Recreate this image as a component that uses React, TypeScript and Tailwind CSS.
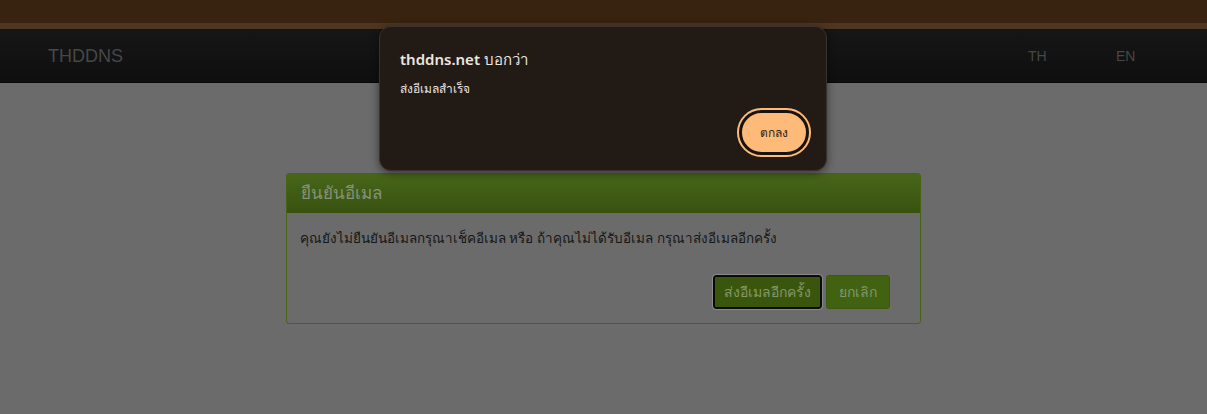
export default function App() {
  return (
    <div className="relative h-[414px] w-full overflow-hidden bg-[#6b6b6b] font-['Liberation_Sans',sans-serif]">
      {/* top strip */}
      <div className="h-[23px] bg-[#37230f]" />
      <div className="h-[7px] bg-[#4e3720] border-b border-[#1a120a]" />
      {/* navbar */}
      <div className="flex h-[53px] items-center bg-gradient-to-b from-[#161616] to-[#0f0f0f] border-b border-[#080808]">
        <div className="pl-[48px] text-[18px] text-[#474747]">THDDNS</div>
        <div className="ml-auto flex">
          <span className="w-[88px] text-[14px] text-[#474747]">TH</span>
          <span className="w-[91px] text-[14px] text-[#474747]">EN</span>
        </div>
      </div>

      {/* panel */}
      <div className="flex justify-center pt-[90px] pr-[1px]">
        <div className="w-[635px] rounded-[3px] border border-[#456414] bg-[#6b6b6b]">
          <div className="flex h-[39px] items-center bg-gradient-to-b from-[#48661a] to-[#37520f] px-[14px] text-[17px] text-[#87927a]">
            ยืนยันอีเมล
          </div>
          <div className="px-[13px] pt-[16px] text-[13.5px] font-medium text-[#161616]">
            คุณยังไม่ยืนยันอีเมลกรุณาเช็คอีเมล หรือ ถ้าคุณไม่ได้รับอีเมล กรุณาส่งอีเมลอีกครั้ง
          </div>
          <div className="flex justify-end gap-[4px] px-[30px] pt-[26px] pb-[14px]">
            <button className="h-[34px] rounded-[3px] border-2 border-[#0a0a0a] bg-[#3a560d] px-[9px] text-[14px] text-[#86966c] outline outline-1 outline-[#8a8a8a]">
              ส่งอีเมลอีกครั้ง
            </button>
            <button className="h-[34px] rounded-[3px] border border-[#3b5a0f] bg-[#416211] px-[12px] text-[14px] text-[#86966c]">
              ยกเลิก
            </button>
          </div>
        </div>
      </div>

      {/* browser alert */}
      <div className="absolute left-[379px] top-[26px] flex h-[145px] w-[448px] flex-col rounded-[12px] border border-[#3a332d] bg-[#221a15] px-[20px] pb-[15px] shadow-[0_2px_8px_rgba(0,0,0,0.5)] font-['Noto_Sans',sans-serif]">
        <div className="pt-[21px] text-[15px] text-[#ece6e0]">
          <span className="font-semibold">thddns.net</span> บอกว่า
        </div>
        <div className="pt-[9px] text-[12px] text-[#ece6e0]">ส่งอีเมลสำเร็จ</div>
        <div className="mt-auto flex justify-end">
          <button className="mr-[-3px] flex h-[45px] w-[70px] items-center justify-center rounded-full border-[3px] border-[#1a1410] bg-[#fdba79] text-[12px] text-[#2a1d12] outline outline-2 outline-[#fdba79]">
            ตกลง
          </button>
        </div>
      </div>
    </div>
  );
}
